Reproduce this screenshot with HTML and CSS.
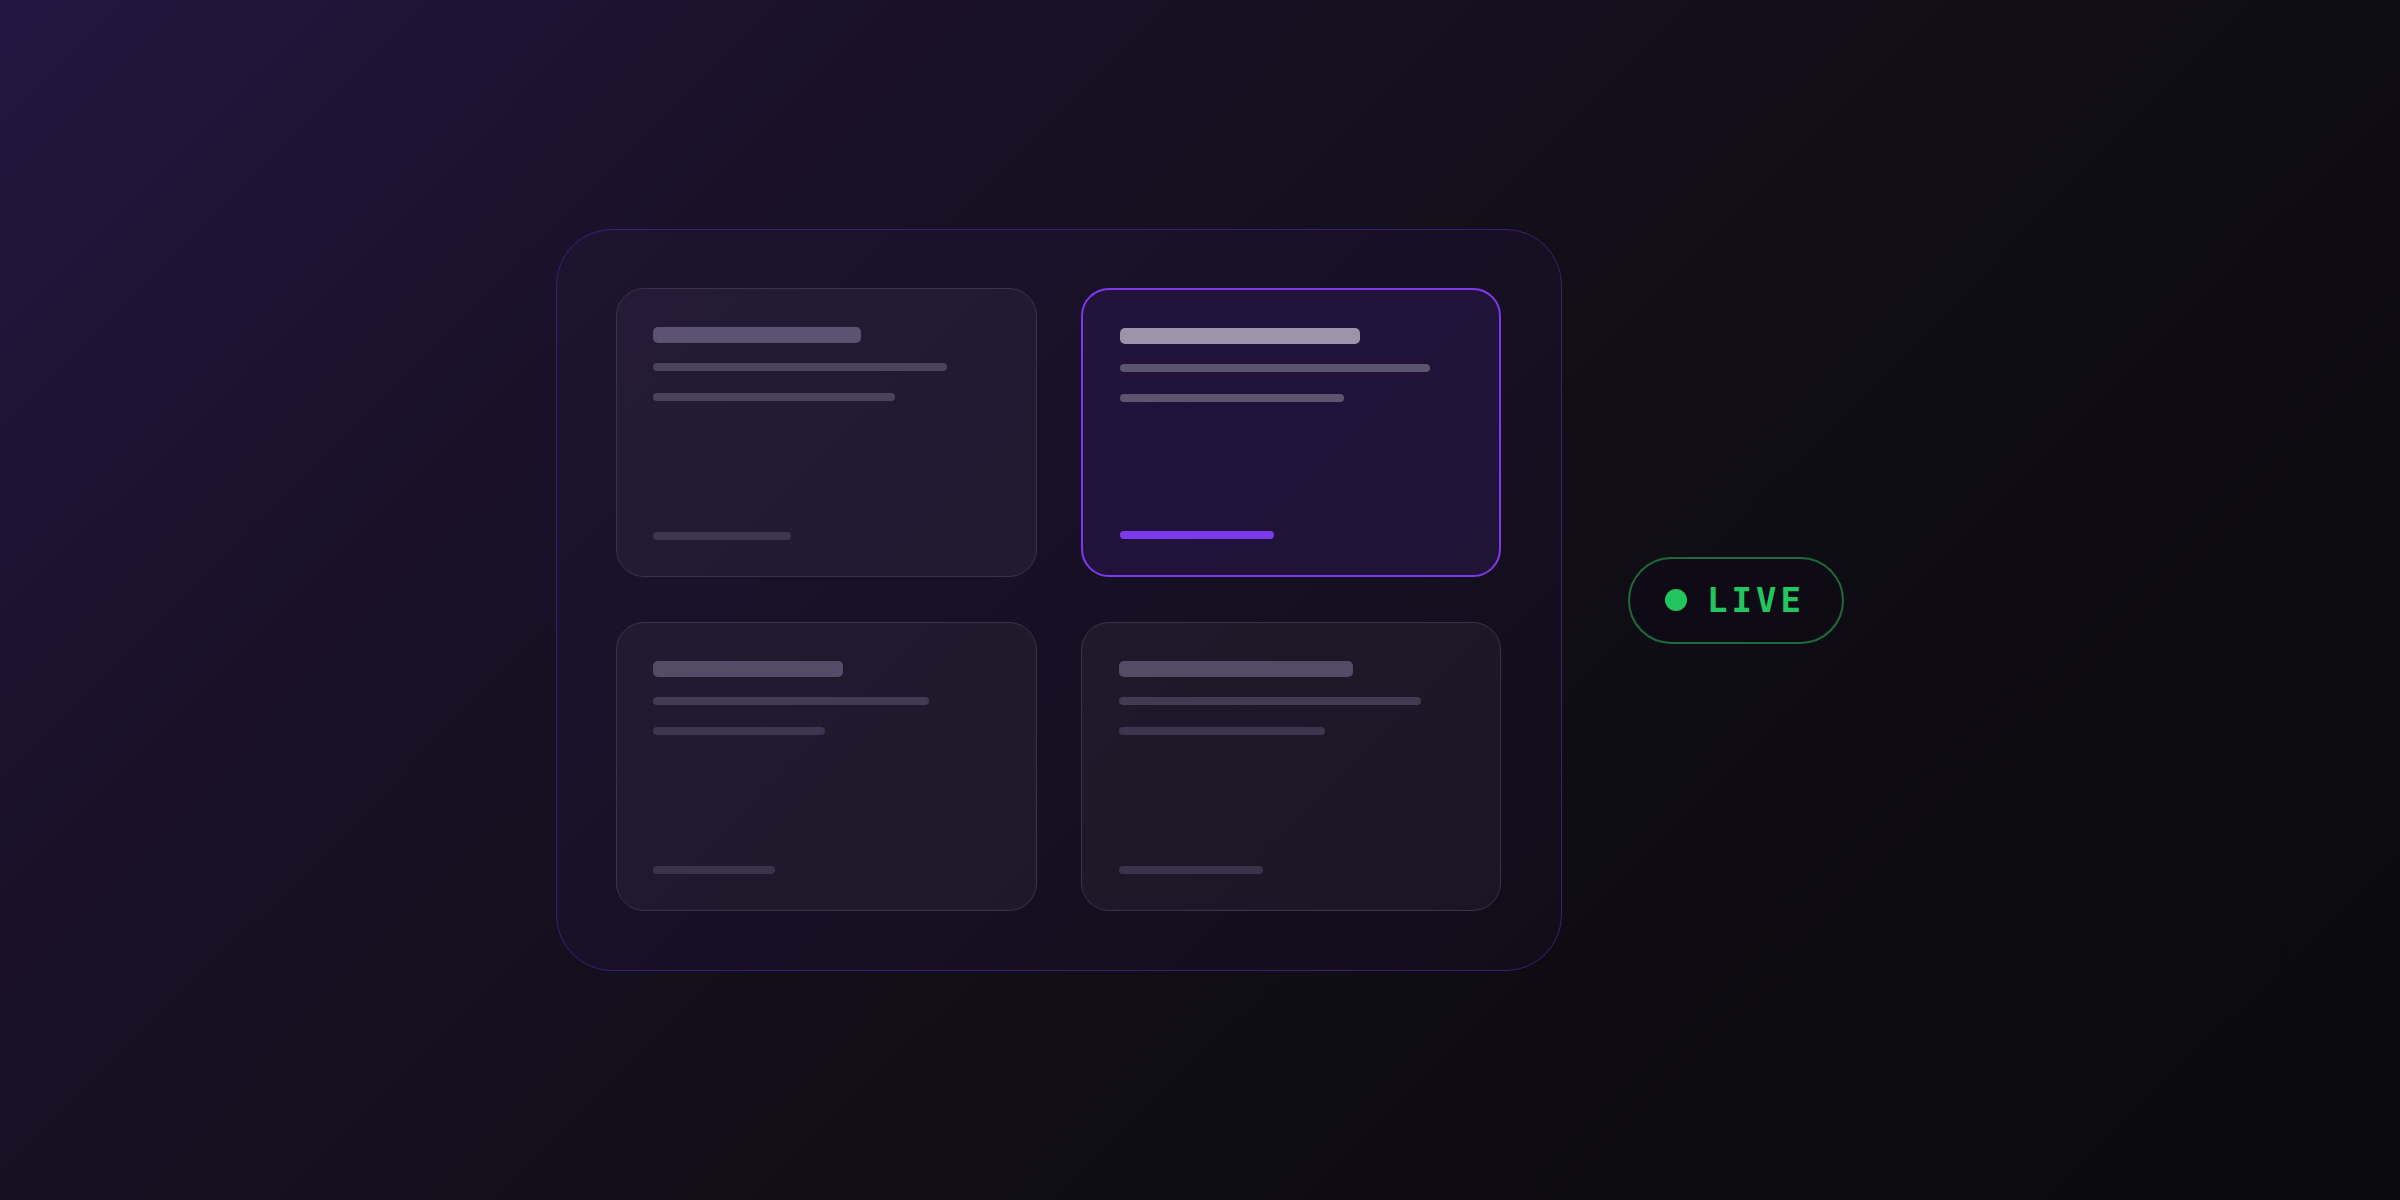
FILE: index.html
```html
<!DOCTYPE html>
<html lang="en">
<head>
<meta charset="utf-8">
<title>Live dashboard</title>
<link rel="stylesheet" href="styles.css">
</head>
<body>
<main class="stage">
  <section class="panel">
    <div class="grid">
      <article class="card card-a">
        <div class="bar title w-a"></div>
        <div class="bar line l1-a"></div>
        <div class="bar line l2-a"></div>
        <div class="bar foot f-a"></div>
      </article>
      <article class="card card-b active">
        <div class="bar title w-b"></div>
        <div class="bar line l1-b"></div>
        <div class="bar line l2-b"></div>
        <div class="bar foot accent f-b"></div>
      </article>
      <article class="card card-c">
        <div class="bar title w-c"></div>
        <div class="bar line l1-c"></div>
        <div class="bar line l2-c"></div>
        <div class="bar foot f-c"></div>
      </article>
      <article class="card card-d">
        <div class="bar title w-d"></div>
        <div class="bar line l1-d"></div>
        <div class="bar line l2-d"></div>
        <div class="bar foot f-d"></div>
      </article>
    </div>
  </section>
  <div class="live">
    <span class="dot"></span>
    <span class="live-text">LIVE</span>
  </div>
</main>
</body>
</html>
```

FILE: styles.css
```css
html, body {
  margin: 0;
  padding: 0;
}

body {
  width: 2400px;
  height: 1200px;
  background: linear-gradient(135deg, #241641 0%, #1a1129 25%, #130f1a 48%, #0e0c12 70%, #0b0a0d 100%);
  font-family: "DejaVu Sans Mono", "Liberation Mono", monospace;
  overflow: hidden;
}

.stage {
  height: 1200px;
  display: flex;
  align-items: center;
  justify-content: center;
  gap: 66px;
}

.panel {
  box-sizing: border-box;
  width: 1006px;
  height: 742px;
  padding: 58px 59px;
  border: 1.5px solid #3a1f73;
  border-radius: 56px;
  background: linear-gradient(135deg, #1d1430 0%, #171025 50%, #110d18 100%);
}

.grid {
  display: grid;
  grid-template-columns: 421px 420px;
  grid-template-rows: 289px 289px;
  column-gap: 44px;
  row-gap: 45px;
}

.card {
  box-sizing: border-box;
  border: 1.5px solid #3a3349;
  border-radius: 28px;
  padding: 38px 36px 36px 36px;
  display: flex;
  flex-direction: column;
  align-items: flex-start;
}

.card-a {
  background: linear-gradient(135deg, #251b38 0%, #221a33 55%, #211a30 100%);
}

.card-b {
  background: linear-gradient(135deg, #22133d 0%, #21123a 60%, #1f1436 100%);
  border: 2px solid #7c3aed;
  padding-left: 37px;
}

.card-c {
  background: linear-gradient(135deg, #221a31 0%, #1f1829 100%);
}

.card-d {
  background: linear-gradient(135deg, #1f1a2b 0%, #1b1624 100%);
  padding-left: 37px;
}

.bar {
  border-radius: 5px;
}

.title {
  height: 16px;
  background: #5c5272;
}

.line {
  height: 8px;
  border-radius: 4px;
  background: #4a435c;
}

.l1-a, .l1-b, .l1-c, .l1-d {
  margin-top: 20px;
}

.l2-a, .l2-b, .l2-c, .l2-d {
  margin-top: 22px;
}

.foot {
  margin-top: auto;
  height: 8px;
  border-radius: 4px;
  background: #3e3650;
}

.active .title {
  background: #9c94a9;
}

.active .line {
  background: #5d556f;
}

.accent {
  background: #7c3aed;
}

.card-c .title,
.card-d .title {
  background: #544b67;
}

.card-c .line,
.card-d .line {
  background: #433b53;
}

.card-d .l2-d { background: #3e3650; }
.card-c .l2-c { background: #3e3650; }

.card-c .foot,
.card-d .foot {
  background: #3a3349;
}

.w-a { width: 208px; }
.l1-a { width: 294px; }
.l2-a { width: 242px; }
.f-a { width: 138px; }

.w-b { width: 240px; }
.l1-b { width: 310px; }
.l2-b { width: 224px; }
.f-b { width: 154px; }

.w-c { width: 190px; }
.l1-c { width: 276px; }
.l2-c { width: 172px; }
.f-c { width: 122px; }

.w-d { width: 234px; }
.l1-d { width: 302px; }
.l2-d { width: 206px; }
.f-d { width: 144px; }

.live {
  box-sizing: border-box;
  height: 87px;
  width: 216px;
  padding: 0 0 0 35px;
  border: 2px solid #1b6b3b;
  border-radius: 44px;
  background: rgba(15, 12, 22, 0.85);
  display: flex;
  align-items: center;
  gap: 20px;
}

.dot {
  width: 22px;
  height: 22px;
  border-radius: 50%;
  background: #22c55e;
  flex: none;
}

.live-text {
  color: #22c55e;
  font-family: "DejaVu Sans Mono", "Liberation Mono", monospace;
  font-weight: bold;
  font-size: 34px;
  letter-spacing: 4px;
  line-height: 1;
}
```
